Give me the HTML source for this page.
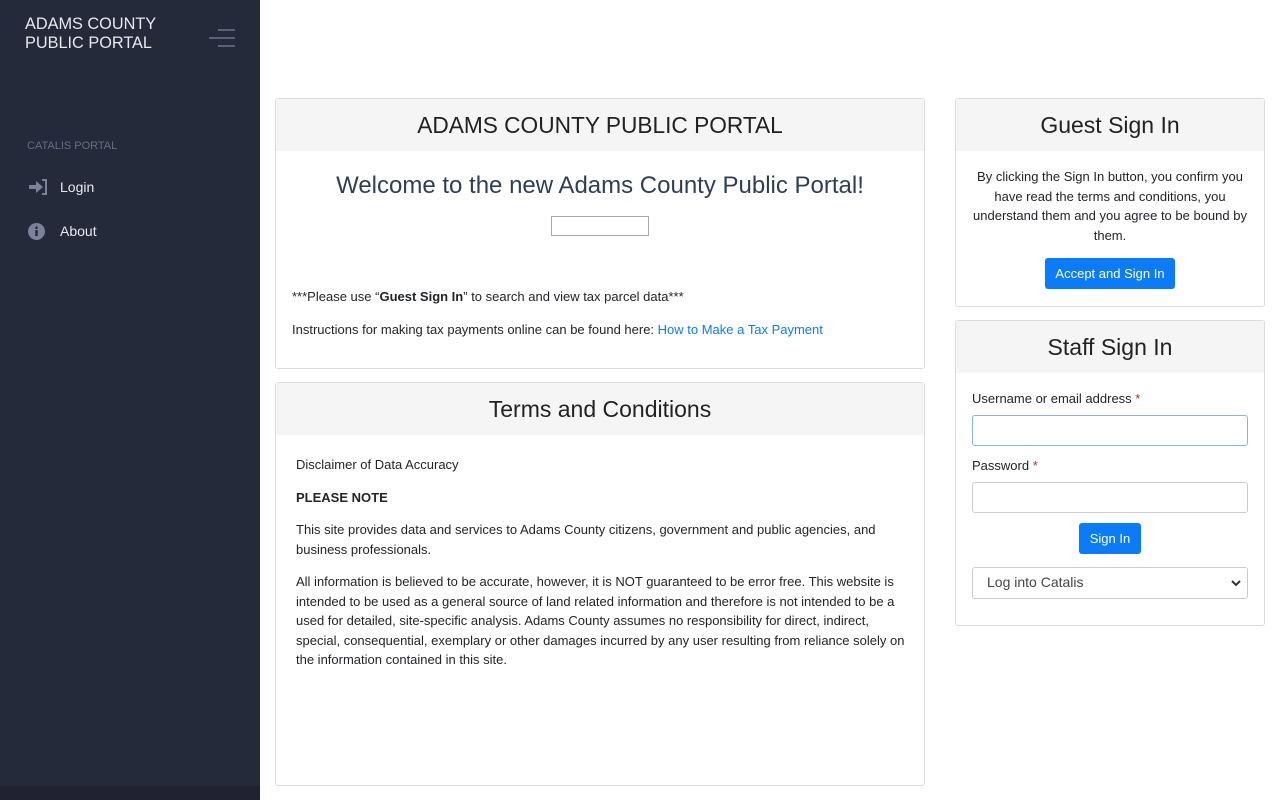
<!DOCTYPE html>
<html><head><meta charset="utf-8"><style>
*{box-sizing:border-box;margin:0;padding:0}
body{width:1280px;height:800px;overflow:hidden;font-family:"Liberation Sans",sans-serif;color:#212529;background:#fff;position:relative}
.side{position:absolute;left:0;top:0;width:260px;height:800px;background:#252a3a}
.side .bot{position:absolute;left:0;bottom:0;width:260px;height:14px;background:#20232f}
.brand{position:absolute;left:25px;top:15px;color:#e6e8ee;font-size:16.3px;line-height:19px}
.ham{position:absolute;left:209px;top:29px}
.ham i{display:block;height:2px;background:#5d6375;margin-bottom:6px;margin-left:auto}
.sec{position:absolute;left:27px;top:140px;font-size:11px;color:#666d85}
.nav{position:absolute;left:28px;font-size:14px;color:#e6e8ee}
.nav span{position:absolute;left:32px;top:0}
.card{position:absolute;border:1px solid #dcdcdc;border-radius:3px;background:#fff}
.card .h{background:#f5f5f5;height:52px;text-align:center;font-size:23px;line-height:52px;color:#222}
p{font-size:13px;line-height:19.5px}
.btn{position:absolute;background:#0b7cf9;color:#fff;font-size:13px;border-radius:3px;text-align:center}
input,.sel{position:absolute;left:16px;width:276px;height:31px;border:1px solid #ccc;border-radius:3px;background:#fff}
.lbl{position:absolute;left:16px;font-size:13px}
.lbl b{color:#a33;font-weight:normal}
</style></head><body>
<div class="side"><div class="bot"></div>
<div class="brand">ADAMS COUNTY<br>PUBLIC PORTAL</div>
<div class="ham"><i style="width:17px"></i><i style="width:26px"></i><i style="width:17px"></i></div>
<div class="sec">CATALIS PORTAL</div>
<div class="nav" style="top:179px"><svg width="20" height="16" viewBox="0 0 20 16" style="position:absolute;top:0"><path d="M1 6h7V2l7 6-7 6v-4H1z" fill="#7a8199"/><path d="M14 1h4v14h-4" stroke="#7a8199" stroke-width="2" fill="none"/></svg><span>Login</span></div>
<div class="nav" style="top:223px"><svg width="17" height="17" viewBox="0 0 17 17" style="position:absolute;top:0"><circle cx="8.5" cy="8.5" r="8.5" fill="#7a8199"/><rect x="7.3" y="7" width="2.4" height="6" fill="#252a3a"/><circle cx="8.5" cy="4.7" r="1.3" fill="#252a3a"/></svg><span>About</span></div>
</div>

<div class="card" style="left:275px;top:98px;width:650px;height:271px">
<div class="h" style="font-size:22.7px">ADAMS COUNTY PUBLIC PORTAL</div>
<div style="text-align:center;font-size:24px;color:#2e3f55;margin-top:21px">Welcome to the new Adams County Public Portal!</div>
<div style="position:absolute;left:275px;top:117px;width:98px;height:20px;border:1px solid #aaa"></div>
<p style="position:absolute;left:16px;top:188px">***Please use “<b>Guest Sign In</b>” to search and view tax parcel data***</p>
<p style="position:absolute;left:16px;top:221px">Instructions for making tax payments online can be found here: <span style="color:#0b7cf9">How to Make a Tax Payment</span></p>
</div>

<div class="card" style="left:275px;top:382px;width:650px;height:404px">
<div class="h">Terms and Conditions</div>
<div style="padding:20px 16px 0 20px">
<p style="margin-bottom:13px">Disclaimer of Data Accuracy</p>
<p style="margin-bottom:13px"><b>PLEASE NOTE</b></p>
<p style="margin-bottom:13px">This site provides data and services to Adams County citizens, government and public agencies, and business professionals.</p>
<p>All information is believed to be accurate, however, it is NOT guaranteed to be error free. This website is intended to be used as a general source of land related information and therefore is not intended to be a used for detailed, site-specific analysis. Adams County assumes no responsibility for direct, indirect, special, consequential, exemplary or other damages incurred by any user resulting from reliance solely on the information contained in this site.</p>
</div></div>

<div class="card" style="left:955px;top:98px;width:310px;height:209px">
<div class="h">Guest Sign In</div>
<p style="text-align:center;padding:16px 14px 0">By clicking the Sign In button, you confirm you have read the terms and conditions, you understand them and you agree to be bound by them.</p>
<div class="btn" style="left:89px;top:159px;width:130px;height:31px;line-height:31px">Accept and Sign In</div>
</div>

<div class="card" style="left:955px;top:320px;width:310px;height:306px">
<div class="h">Staff Sign In</div>
<div class="lbl" style="top:70px">Username or email address <b>*</b></div>
<input style="top:94px;border-color:#8ab4e8">
<div class="lbl" style="top:137px">Password <b>*</b></div>
<input style="top:161px">
<div class="btn" style="left:123px;top:202px;width:62px;height:31px;line-height:31px">Sign In</div>
<div class="sel" style="top:246px;height:32px;font-size:14px;color:#444;padding:6px 14px">Log into Catalis<svg width="10" height="7" viewBox="0 0 10 7" style="position:absolute;right:6px;top:12px"><path d="M1 1l4 4 4-4" stroke="#333" stroke-width="2" fill="none"/></svg></div>
</div>
</body></html>
